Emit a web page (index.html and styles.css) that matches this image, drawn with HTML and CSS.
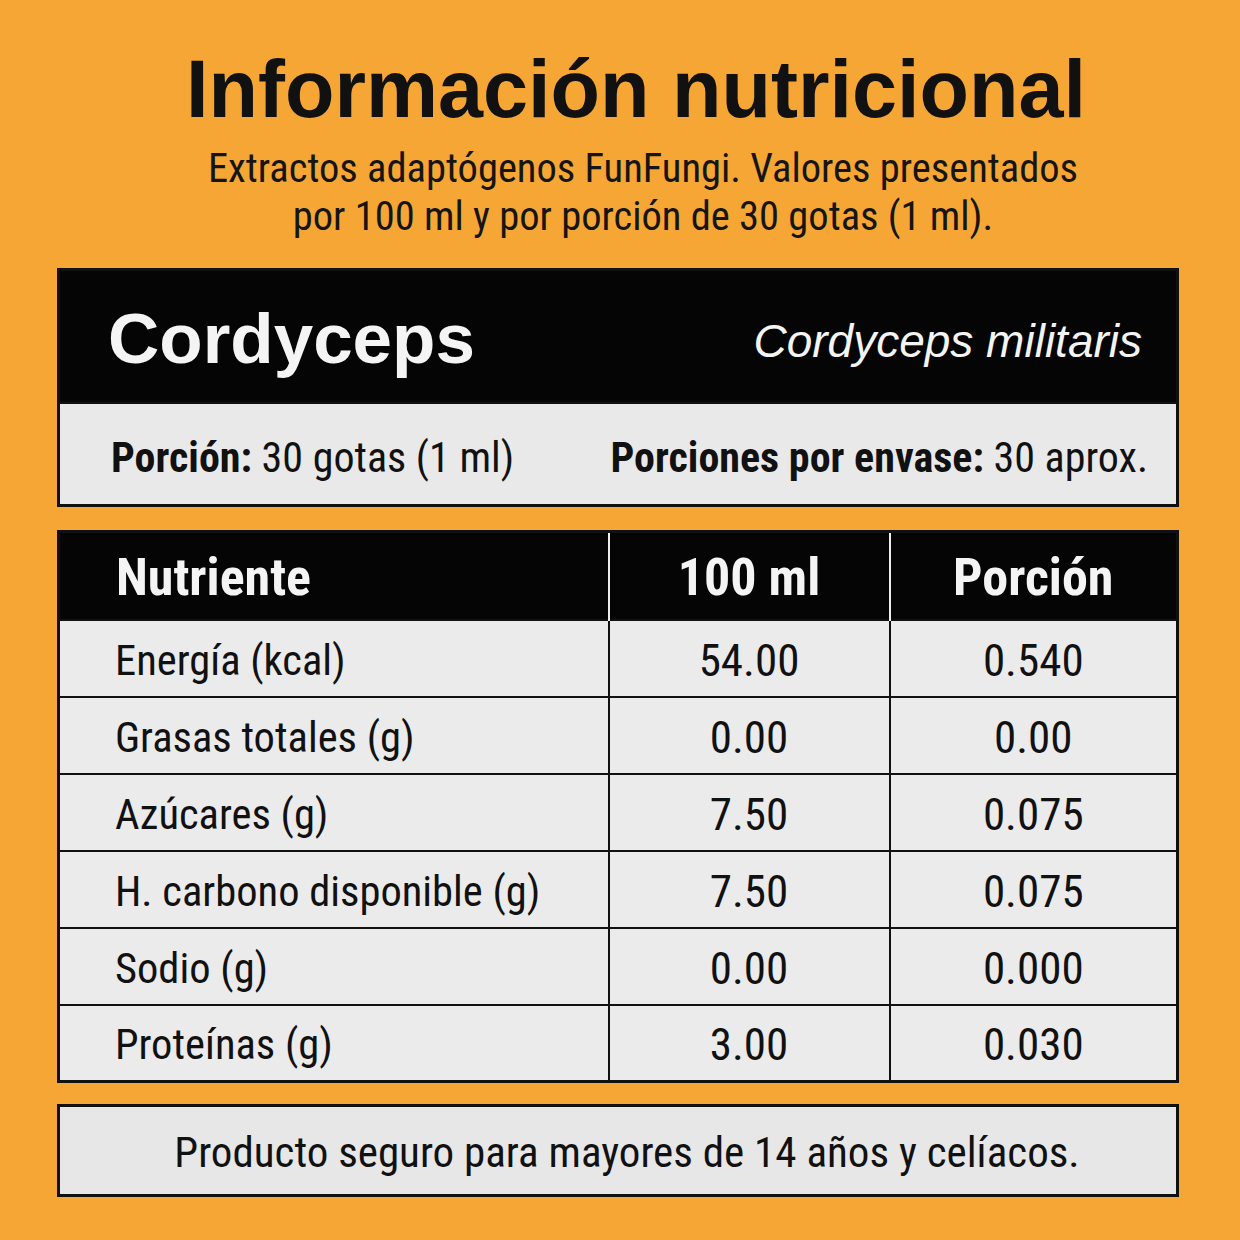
FILE: index.html
```html
<!DOCTYPE html>
<html lang="es">
<head>
<meta charset="utf-8">
<title>Información nutricional</title>
<link rel="stylesheet" href="styles.css">
</head>
<body>
<main class="page">
  <header class="intro">
    <h1 class="title">Información nutricional</h1>
    <p class="subtitle">Extractos adaptógenos FunFungi. Valores presentados<br>por 100 ml y por porción de 30 gotas (1 ml).</p>
  </header>

  <section class="product">
    <div class="product-head">
      <h2 class="product-name">Cordyceps</h2>
      <span class="product-latin">Cordyceps militaris</span>
    </div>
    <div class="product-serving">
      <span><b>Porción:</b> 30 gotas (1 ml)</span>
      <span><b>Porciones por envase:</b> 30 aprox.</span>
    </div>
  </section>

  <table class="nutri">
    <colgroup>
      <col class="col-name">
      <col class="col-100">
      <col class="col-por">
    </colgroup>
    <thead>
      <tr><th class="c-name">Nutriente</th><th>100 ml</th><th>Porción</th></tr>
    </thead>
    <tbody>
      <tr><td class="c-name">Energía (kcal)</td><td>54.00</td><td>0.540</td></tr>
      <tr><td class="c-name">Grasas totales (g)</td><td>0.00</td><td>0.00</td></tr>
      <tr><td class="c-name">Azúcares (g)</td><td>7.50</td><td>0.075</td></tr>
      <tr><td class="c-name">H. carbono disponible (g)</td><td>7.50</td><td>0.075</td></tr>
      <tr><td class="c-name">Sodio (g)</td><td>0.00</td><td>0.000</td></tr>
      <tr><td class="c-name">Proteínas (g)</td><td>3.00</td><td>0.030</td></tr>
    </tbody>
  </table>

  <footer class="note">Producto seguro para mayores de 14 años y celíacos.</footer>
</main>
</body>
</html>
```

FILE: styles.css
```css
html, body {
  margin: 0;
  padding: 0;
}
body {
  background: #f5a634;
  width: 1240px;
  height: 1240px;
  overflow: hidden;
  color: #111;
  font-family: "Roboto Condensed", "Roboto", "Liberation Sans", sans-serif;
}
.page {
  padding: 42px 61px 0 57px;
  display: flex;
  flex-direction: column;
}
.intro {
  text-align: center;
  margin-left: 36px;
}
.title {
  margin: 0;
  font-family: "Liberation Sans", Arial, sans-serif;
  font-weight: 700;
  font-size: 81px;
  line-height: 94px;
  color: #111;
}
.subtitle {
  margin: 8px 0 0 14px;
  font-size: 40.5px;
  line-height: 48px;
  color: #151515;
}
.product {
  margin-top: 28px;
  border: 3px solid #111;
  display: flex;
  flex-direction: column;
}
.product-head {
  background: #050505;
  height: 131px;
  display: flex;
  align-items: center;
  justify-content: space-between;
  padding: 0 34px 0 48px;
}
.product-name {
  margin: 4px 0 0 0;
  font-family: "Liberation Sans", Arial, sans-serif;
  font-weight: 700;
  font-size: 71px;
  color: #f4f4f4;
}
.product-latin {
  margin-top: 8px;
  font-family: "Liberation Sans", Arial, sans-serif;
  font-style: italic;
  font-size: 46px;
  color: #f4f4f4;
}
.product-serving {
  background: #e9e9e9;
  border-top: 2px solid #111;
  height: 102px;
  box-sizing: border-box;
  display: flex;
  align-items: center;
  justify-content: space-between;
  padding: 6px 28px 0 51px;
  font-size: 42px;
}
.product-serving b {
  font-weight: 700;
}
.nutri {
  margin-top: 23px;
  width: 1122px;
  border-collapse: collapse;
  border: 3px solid #111;
  table-layout: fixed;
}
.col-name { width: 550px; }
.col-100 { width: 281px; }
.nutri th, .nutri td {
  text-align: center;
  padding: 0;
}
.nutri thead tr {
  background: #050505;
  height: 88px;
}
.nutri th {
  color: #f4f4f4;
  font-weight: 700;
  font-size: 52px;
  padding-top: 4px;
  border-left: 2px solid #eee;
}
.nutri th:first-child { border-left: none; }
.nutri tbody tr {
  background: #ebebeb;
  height: 77px;
}
.nutri td {
  font-size: 45px;
  padding-top: 4px;
  border: 2px solid #111;
}
.nutri .c-name {
  text-align: left;
  padding-left: 56px;
}
.nutri td.c-name {
  font-size: 42.5px;
  padding-left: 55px;
}
.note {
  margin-top: 21px;
  border: 3px solid #111;
  background: #e7e7e7;
  height: 85px;
  display: flex;
  align-items: center;
  justify-content: center;
  padding: 2px 0 0 18px;
  box-sizing: content-box;
  font-size: 43px;
}
```
